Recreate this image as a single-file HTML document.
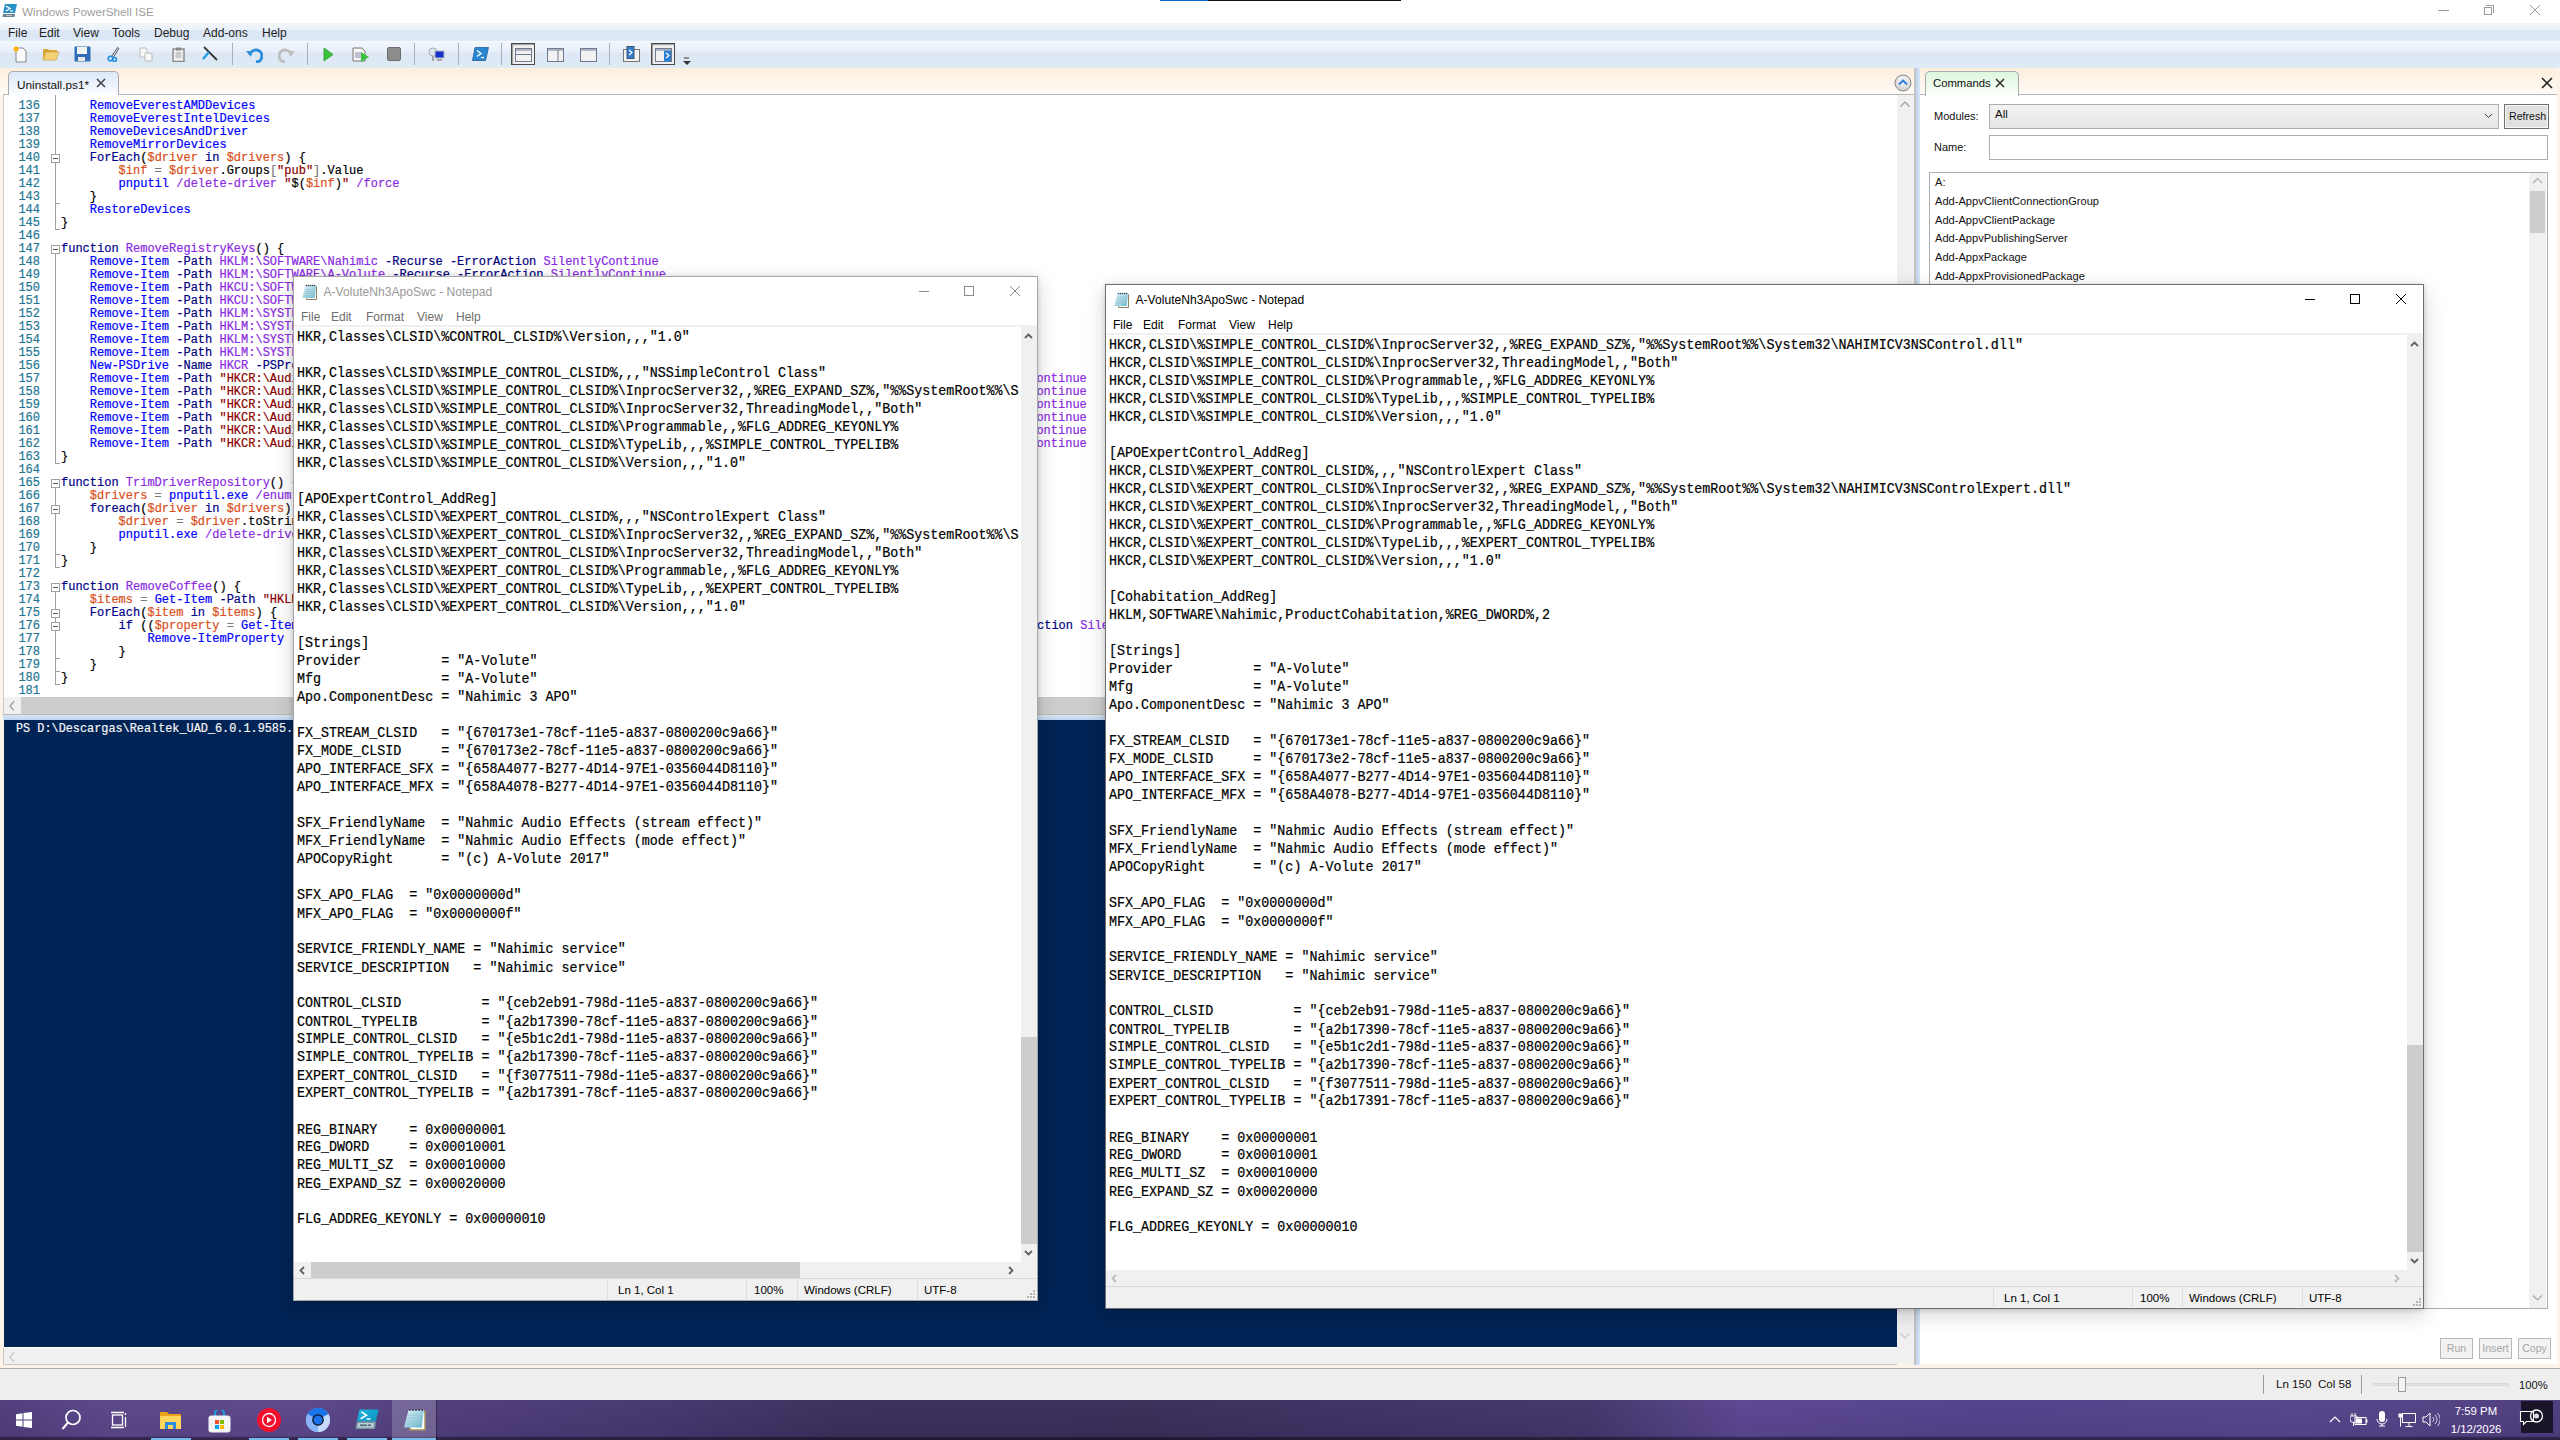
<!DOCTYPE html><html><head><meta charset="utf-8"><title>ISE</title><style>
*{box-sizing:border-box}
body{margin:0;width:2560px;height:1440px;position:relative;overflow:hidden;background:#fff;font-family:"Liberation Sans",sans-serif;font-size:12px;color:#000}
.a{position:absolute}
.mono{font-family:"Liberation Mono",monospace;white-space:pre;-webkit-text-stroke:0.2px currentColor}
pre{margin:0}
</style></head><body><div class="a" style="left:0;top:0;width:2560px;height:23px;background:#fff"></div>
<div class="a" style="left:1160px;top:0;width:48px;height:1px;background:#0a64c8"></div>
<div class="a" style="left:1208px;top:0;width:193px;height:1px;background:#111"></div>
<svg class="a" style="left:2px;top:3px" width="16" height="16" viewBox="0 0 16 16">
<path d="M3 1h12l-2 9H1z" fill="#2a8fc4"/><path d="M4 3l4 2.5-4 2.5" stroke="#fff" stroke-width="1.4" fill="none"/><path d="M8 8h3" stroke="#fff" stroke-width="1.2"/>
<path d="M1 11h12l-.6 3H.4z" fill="#6b7f8c"/><path d="M4 12.5h6" stroke="#cfd8de" stroke-width=".8"/></svg>
<div class="a" style="left:22px;top:5px;font-size:11.7px;color:#a0a0a0">Windows PowerShell ISE</div>
<div class="a" style="left:2438px;top:10px;width:11px;height:1px;background:#9a9a9a"></div>
<div class="a" style="left:2486px;top:5px;width:8px;height:8px;border:1px solid #9a9a9a;border-left:none;border-bottom:none"></div>
<div class="a" style="left:2484px;top:7px;width:8px;height:8px;border:1px solid #9a9a9a"></div>
<svg class="a" style="left:2529px;top:4px" width="12" height="12"><path d="M1 1L11 11M11 1L1 11" stroke="#9a9a9a" stroke-width="1"/></svg>
<div class="a" style="left:0;top:23px;width:2560px;height:18px;background:linear-gradient(#f3f7fb,#ebf1fa 38%,#dde7f5 42%,#dce7f5 80%,#e0ebf8)"></div>
<div class="a" style="left:8px;top:26px;font-size:12px;color:#1e1e1e">File</div>
<div class="a" style="left:39px;top:26px;font-size:12px;color:#1e1e1e">Edit</div>
<div class="a" style="left:73px;top:26px;font-size:12px;color:#1e1e1e">View</div>
<div class="a" style="left:112px;top:26px;font-size:12px;color:#1e1e1e">Tools</div>
<div class="a" style="left:154px;top:26px;font-size:12px;color:#1e1e1e">Debug</div>
<div class="a" style="left:203px;top:26px;font-size:12px;color:#1e1e1e">Add-ons</div>
<div class="a" style="left:262px;top:26px;font-size:12px;color:#1e1e1e">Help</div>
<div class="a" style="left:0;top:41px;width:2560px;height:27px;background:linear-gradient(#f3f8fc,#edf2fb 25%,#e7effa 40%,#dee7f5 44%,#dde8f5 75%,#e0ebf8)"></div>
<div class="a" style="left:232px;top:43px;width:1px;height:22px;background:#a8b0bc"></div>
<div class="a" style="left:307px;top:43px;width:1px;height:22px;background:#a8b0bc"></div>
<div class="a" style="left:414px;top:43px;width:1px;height:22px;background:#a8b0bc"></div>
<div class="a" style="left:458px;top:43px;width:1px;height:22px;background:#a8b0bc"></div>
<div class="a" style="left:501px;top:43px;width:1px;height:22px;background:#a8b0bc"></div>
<div class="a" style="left:609px;top:43px;width:1px;height:22px;background:#a8b0bc"></div>
<div class="a" style="left:511px;top:43px;width:24px;height:22px;border:1px solid #4a4a4a;background:#f0f0f0;box-shadow:inset 1px 1px 1px #999"></div>
<div class="a" style="left:651px;top:43px;width:24px;height:22px;border:1px solid #4a4a4a;background:#f0f0f0;box-shadow:inset 1px 1px 1px #999"></div>
<svg class="a" style="left:11px;top:45px" width="18" height="18" viewBox="0 0 18 18"><path d="M5 3h7l3 3v11H5z" fill="#fafafa" stroke="#888"/><circle cx="5" cy="4" r="2.5" fill="#ffb300"/></svg>
<svg class="a" style="left:42px;top:46px" width="18" height="16" viewBox="0 0 18 16"><path d="M1 3h5l1 1h8v9H1z" fill="#d9a93d"/><path d="M1 14l3-8h13l-3 8z" fill="#f3d27a" stroke="#c99a30" stroke-width=".6"/></svg>
<svg class="a" style="left:74px;top:46px" width="17" height="16" viewBox="0 0 17 16"><rect x="0.5" y="0.5" width="16" height="15" rx="1" fill="#2f6eb8"/><rect x="3" y="1" width="10" height="7" fill="#f4f4f4"/><rect x="4" y="11" width="7" height="4" fill="#e8e8e8"/></svg>
<svg class="a" style="left:107px;top:46px" width="14" height="16" viewBox="0 0 14 16"><path d="M4 11L11 1M6 12L12 2" stroke="#555" stroke-width="1"/><circle cx="3.5" cy="12.5" r="2.3" fill="none" stroke="#1e8fe0" stroke-width="1.6"/><circle cx="7.5" cy="13.5" r="2" fill="none" stroke="#1e8fe0" stroke-width="1.6"/></svg>
<svg class="a" style="left:139px;top:47px" width="14" height="15" viewBox="0 0 14 15"><path d="M1 1h6l1 1v8H1z" fill="#f8f8f8" stroke="#bbb"/><path d="M6 6h6l1 1v7H6z" fill="#f8f8f8" stroke="#bbb"/></svg>
<svg class="a" style="left:172px;top:47px" width="13" height="15" viewBox="0 0 13 15"><rect x="1" y="2" width="11" height="12.5" fill="#eee" stroke="#888" stroke-width="1.4"/><rect x="4" y="0.5" width="5" height="3" fill="#888"/><path d="M3.5 6h6M3.5 8h6M3.5 10h6" stroke="#aaa"/></svg>
<svg class="a" style="left:202px;top:46px" width="16" height="15" viewBox="0 0 16 15"><path d="M2 1L15 14" stroke="#333" stroke-width="1.8"/><path d="M7 6L1 13" stroke="#1e9be0" stroke-width="2.2"/></svg>
<svg class="a" style="left:246px;top:46px" width="17" height="17" viewBox="0 0 17 17"><path d="M4 9 A6 6 0 1 1 10 16" fill="none" stroke="#2f8fd6" stroke-width="3"/><path d="M0 5l6 0 -1 6z" fill="#2f8fd6"/></svg>
<svg class="a" style="left:278px;top:46px" width="17" height="17" viewBox="0 0 17 17"><path d="M13 9 A6 6 0 1 0 7 16" fill="none" stroke="#bdbdbd" stroke-width="3"/><path d="M17 5l-6 0 1 6z" fill="#bdbdbd"/></svg>
<svg class="a" style="left:323px;top:47px" width="11" height="15" viewBox="0 0 11 15"><path d="M1 1l9 6.5-9 6.5z" fill="#3cc23c" stroke="#2a9a2a" stroke-width=".8"/></svg>
<svg class="a" style="left:352px;top:46px" width="18" height="16" viewBox="0 0 18 16"><path d="M1 2h9l3 3v10H1z" fill="#f7f7f7" stroke="#777"/><path d="M3 7h6M3 9h6M3 11h6" stroke="#8a8ab0"/><path d="M9 6l8 5-8 5z" fill="#3cc23c"/></svg>
<svg class="a" style="left:387px;top:47px" width="14" height="14" viewBox="0 0 14 14"><rect x="0.5" y="0.5" width="13" height="13" rx="1.5" fill="#8c8c8c" stroke="#6e6e6e"/></svg>
<svg class="a" style="left:428px;top:46px" width="17" height="16" viewBox="0 0 17 16"><circle cx="5" cy="6" r="4" fill="#dfe8ee" stroke="#aab"/><rect x="7" y="5" width="9" height="7" fill="#1530c8" stroke="#bbb"/><path d="M9 14h5M5 10v5" stroke="#666"/></svg>
<svg class="a" style="left:472px;top:47px" width="17" height="14" viewBox="0 0 17 14"><path d="M3 0.5h13.5l-3 13H0.5z" fill="#2b86d0" stroke="#1d5fa0" stroke-width=".8"/><path d="M5 3.5l4 3-4 3" stroke="#fff" stroke-width="1.4" fill="none"/><path d="M9 10.5h3" stroke="#fff" stroke-width="1.2"/></svg>
<svg class="a" style="left:515px;top:48px" width="17" height="14" viewBox="0 0 17 14"><rect x="0.5" y="0.5" width="16" height="13" fill="#f2f2f2" stroke="#6f7a90"/><path d="M1 2h15M1 6.5h15" stroke="#6f7a90"/></svg>
<svg class="a" style="left:547px;top:48px" width="17" height="14" viewBox="0 0 17 14"><rect x="0.5" y="0.5" width="16" height="13" fill="#f2f2f2" stroke="#6f7a90"/><path d="M1 2h15M11 2v11" stroke="#6f7a90"/></svg>
<svg class="a" style="left:580px;top:48px" width="17" height="14" viewBox="0 0 17 14"><rect x="0.5" y="0.5" width="16" height="13" fill="#f2f2f2" stroke="#6f7a90"/><path d="M1 2h15" stroke="#6f7a90"/></svg>
<svg class="a" style="left:623px;top:46px" width="17" height="16" viewBox="0 0 17 16"><rect x="0.5" y="3.5" width="16" height="12" fill="#f2f2f2" stroke="#777"/><rect x="4" y="0.5" width="7" height="12" fill="#2f7fd0" stroke="#456"/><path d="M6 4l3 2.5-3 2.5" stroke="#fff" stroke-width="1.2" fill="none"/></svg>
<svg class="a" style="left:655px;top:48px" width="17" height="14" viewBox="0 0 17 14"><rect x="0.5" y="0.5" width="16" height="13" fill="#f2f2f2" stroke="#6f7a90"/><path d="M1 2h15" stroke="#6f7a90"/><rect x="9" y="2.5" width="7" height="11" fill="#2f7fd0"/><path d="M11 5l3 2.5-3 2.5" stroke="#fff" stroke-width="1.2" fill="none"/></svg>
<svg class="a" style="left:683px;top:57px" width="8" height="8" viewBox="0 0 8 8"><path d="M1 1h5" stroke="#333"/><path d="M0 4h8l-4 4z" fill="#333"/></svg>
<div class="a" style="left:0;top:68px;width:2560px;height:1300px;background:#fdf3e8"></div>
<div class="a" style="left:0;top:68px;width:2560px;height:27px;background:linear-gradient(#fdeedd,#fef7ef 70%,#fffcf8)"></div>
<div class="a" style="left:8px;top:71px;width:111px;height:25px;border:1px solid #a9a9a9;border-bottom:none;border-radius:5px 5px 0 0;background:linear-gradient(#dce8f8,#eef4fc 60%,#fff)"></div>
<div class="a" style="left:17px;top:78px;font-size:11.8px;color:#111">Uninstall.ps1*</div>
<svg class="a" style="left:96px;top:78px" width="10" height="10" viewBox="0 0 10 10"><path d="M1 1L9 9M9 1L1 9" stroke="#444" stroke-width="1.6"/></svg>
<div class="a" style="left:3px;top:95px;width:1894px;height:602px;background:#fff;border-left:1px solid #c8c8c8"></div>
<div class="a" style="left:55px;top:95px;width:1px;height:594px;background:#a0a0a0"></div>
<div class="a" style="left:1897px;top:95px;width:17px;height:620px;background:#f0f0f0"></div>
<svg class="a" style="left:1899px;top:100px" width="12" height="8" viewBox="0 0 12 8"><path d="M1.5 6.5L6 2l4.5 4.5" stroke="#9a9a9a" fill="none" stroke-width="1.2"/></svg>
<div class="a" style="left:3px;top:94px;width:1911px;height:1px;background:#b5b5b5"></div>
<div class="a" style="left:9px;top:93px;width:109px;height:2px;background:#fbfdff"></div>
<svg class="a" style="left:1894px;top:74px" width="18" height="18" viewBox="0 0 18 18"><defs><radialGradient id="cg" cx="50%" cy="35%" r="60%"><stop offset="0" stop-color="#fff"/><stop offset="1" stop-color="#cfcfcf"/></radialGradient></defs><circle cx="9" cy="9" r="8" fill="url(#cg)" stroke="#8a8a8a"/><path d="M5 10.5L9 6.5l4 4" stroke="#2f7fd8" stroke-width="2" fill="none"/></svg>
<div class="a" style="left:3px;top:697px;width:1894px;height:17px;background:#f0f0f0;border-left:1px solid #c8c8c8"></div>
<div class="a" style="left:21px;top:697px;width:1858px;height:17px;background:#cdcdcd"></div>
<svg class="a" style="left:8px;top:700px" width="8" height="12" viewBox="0 0 8 12"><path d="M6 1.5L2 6l4 4.5" stroke="#9a9a9a" fill="none" stroke-width="1.2"/></svg>
<div class="a" style="left:3px;top:714px;width:1894px;height:1px;background:#c0b8b0"></div>
<div class="a" style="left:3px;top:715px;width:1894px;height:5px;background:linear-gradient(#dbe7f5,#bcd4f0)"></div>
<div class="a" style="left:4px;top:720px;width:1893px;height:627px;background:#012456"></div>
<div class="a" style="left:3px;top:1347px;width:1894px;height:17px;background:#f0f0f0;border-left:1px solid #c8c8c8;border-top:1px solid #fff"></div>
<svg class="a" style="left:8px;top:1351px" width="8" height="12" viewBox="0 0 8 12"><path d="M6 1.5L2 6l4 4.5" stroke="#c8c8c8" fill="none" stroke-width="1.2"/></svg>
<div class="a" style="left:3px;top:1364px;width:1894px;height:1px;background:#c8c8c8"></div>
<div class="a" style="left:1897px;top:720px;width:17px;height:644px;background:#f0f0f0"></div>
<svg class="a" style="left:1899px;top:1332px" width="12" height="8" viewBox="0 0 12 8"><path d="M1.5 1.5L6 6l4.5-4.5" stroke="#c8c8c8" fill="none" stroke-width="1.2"/></svg>
<div class="a" style="left:1914px;top:68px;width:2px;height:1297px;background:#c4c4c4"></div>
<div class="a" style="left:1916px;top:68px;width:4px;height:1297px;background:linear-gradient(90deg,#bcd4f0,#dbe7f5)"></div>
<div class="a" style="left:0;top:1368px;width:2560px;height:1px;background:#a8a8a8"></div>
<div class="a" style="left:0;top:1369px;width:2560px;height:31px;background:#eeeeee"></div>
<div class="a" style="left:2263px;top:1375px;width:1px;height:19px;background:#9a9a9a"></div>
<div class="a" style="left:2361px;top:1375px;width:1px;height:19px;background:#9a9a9a"></div>
<div class="a" style="left:2276px;top:1377px;font-size:11.6px;color:#111">Ln 150&nbsp; Col 58</div>
<div class="a" style="left:2373px;top:1383px;width:136px;height:3px;background:#e2e2e2;border:1px solid #d8d8d8"></div>
<div class="a" style="left:2398px;top:1377px;width:8px;height:15px;background:#f4f4f4;border:1px solid #9a9a9a"></div>
<div class="a" style="left:2519px;top:1379px;font-size:11.2px;color:#111">100%</div>
<pre class="a mono" style="left:61px;top:100px;font-size:12.000px;line-height:13px;color:#000;width:1835px;overflow:hidden;height:598px">    <span style="color:#0000ff">RemoveEverestAMDDevices</span>
    <span style="color:#0000ff">RemoveEverestIntelDevices</span>
    <span style="color:#0000ff">RemoveDevicesAndDriver</span>
    <span style="color:#0000ff">RemoveMirrorDevices</span>
    <span style="color:#00008b">ForEach</span>(<span style="color:#d8501c">$driver</span> <span style="color:#00008b">in</span> <span style="color:#d8501c">$drivers</span>) {
        <span style="color:#d8501c">$inf</span><span style="color:#7a7a7a"> = </span><span style="color:#d8501c">$driver</span><span style="color:#000000">.Groups</span><span style="color:#7a7a7a">[</span><span style="color:#8b0000">"pub"</span><span style="color:#7a7a7a">]</span><span style="color:#000000">.Value</span>
        <span style="color:#0000ff">pnputil</span> <span style="color:#8a2be2">/delete-driver</span> <span style="color:#8b0000">"</span>$(<span style="color:#d8501c">$inf</span>)<span style="color:#8b0000">"</span> <span style="color:#8a2be2">/force</span>
    }
    <span style="color:#0000ff">RestoreDevices</span>
}

<span style="color:#00008b">function</span> <span style="color:#8a2be2">RemoveRegistryKeys</span>() {
    <span style="color:#0000ff">Remove-Item</span> <span style="color:#000080">-Path</span> <span style="color:#8a2be2">HKLM:\SOFTWARE\Nahimic</span> <span style="color:#000080">-Recurse</span> <span style="color:#000080">-ErrorAction</span> <span style="color:#8a2be2">SilentlyContinue</span>
    <span style="color:#0000ff">Remove-Item</span> <span style="color:#000080">-Path</span> <span style="color:#8a2be2">HKLM:\SOFTWARE\A-Volute</span> <span style="color:#000080">-Recurse</span> <span style="color:#000080">-ErrorAction</span> <span style="color:#8a2be2">SilentlyContinue</span>
    <span style="color:#0000ff">Remove-Item</span> <span style="color:#000080">-Path</span> <span style="color:#8a2be2">HKCU:\SOFTWARE\Nahimic</span> <span style="color:#000080">-Recurse</span> <span style="color:#000080">-ErrorAction</span> <span style="color:#8a2be2">SilentlyContinue</span>
    <span style="color:#0000ff">Remove-Item</span> <span style="color:#000080">-Path</span> <span style="color:#8a2be2">HKCU:\SOFTWARE\A-Volute</span> <span style="color:#000080">-Recurse</span> <span style="color:#000080">-ErrorAction</span> <span style="color:#8a2be2">SilentlyContinue</span>
    <span style="color:#0000ff">Remove-Item</span> <span style="color:#000080">-Path</span> <span style="color:#8a2be2">HKLM:\SYSTEM\CurrentControlSet\Services\NahimicService</span> <span style="color:#000080">-Recurse</span> <span style="color:#000080">-ErrorAction</span> <span style="color:#8a2be2">SilentlyContinue</span>
    <span style="color:#0000ff">Remove-Item</span> <span style="color:#000080">-Path</span> <span style="color:#8a2be2">HKLM:\SYSTEM\CurrentControlSet\Services\NahimicService</span> <span style="color:#000080">-Recurse</span> <span style="color:#000080">-ErrorAction</span> <span style="color:#8a2be2">SilentlyContinue</span>
    <span style="color:#0000ff">Remove-Item</span> <span style="color:#000080">-Path</span> <span style="color:#8a2be2">HKLM:\SYSTEM\CurrentControlSet\Services\NahimicService</span> <span style="color:#000080">-Recurse</span> <span style="color:#000080">-ErrorAction</span> <span style="color:#8a2be2">SilentlyContinue</span>
    <span style="color:#0000ff">Remove-Item</span> <span style="color:#000080">-Path</span> <span style="color:#8a2be2">HKLM:\SYSTEM\CurrentControlSet\Services\NahimicService</span> <span style="color:#000080">-Recurse</span> <span style="color:#000080">-ErrorAction</span> <span style="color:#8a2be2">SilentlyContinue</span>
    <span style="color:#0000ff">New-PSDrive</span> <span style="color:#000080">-Name</span> <span style="color:#8a2be2">HKCR</span> <span style="color:#000080">-PSProvider</span> <span style="color:#8a2be2">Registry</span> <span style="color:#000080">-Root</span> <span style="color:#8a2be2">HKEY_CLASSES_ROOT</span>
    <span style="color:#0000ff">Remove-Item</span> <span style="color:#000080">-Path</span> <span style="color:#8b0000">"HKCR:\AudioEngine\AudioProcessingObjects\{670173e1-78cf-11e5-a837-0800200c9a66}</span>
    <span style="color:#0000ff">Remove-Item</span> <span style="color:#000080">-Path</span> <span style="color:#8b0000">"HKCR:\AudioEngine\AudioProcessingObjects\{670173e2-78cf-11e5-a837-0800200c9a66}</span>
    <span style="color:#0000ff">Remove-Item</span> <span style="color:#000080">-Path</span> <span style="color:#8b0000">"HKCR:\AudioEngine\AudioProcessingObjects\{670173e3-78cf-11e5-a837-0800200c9a66}</span>
    <span style="color:#0000ff">Remove-Item</span> <span style="color:#000080">-Path</span> <span style="color:#8b0000">"HKCR:\AudioEngine\AudioProcessingObjects\{670173e4-78cf-11e5-a837-0800200c9a66}</span>
    <span style="color:#0000ff">Remove-Item</span> <span style="color:#000080">-Path</span> <span style="color:#8b0000">"HKCR:\AudioEngine\AudioProcessingObjects\{670173e5-78cf-11e5-a837-0800200c9a66}</span>
    <span style="color:#0000ff">Remove-Item</span> <span style="color:#000080">-Path</span> <span style="color:#8b0000">"HKCR:\AudioEngine\AudioProcessingObjects\{670173e6-78cf-11e5-a837-0800200c9a66}</span>
}

<span style="color:#00008b">function</span> <span style="color:#8a2be2">TrimDriverRepository</span>() {
    <span style="color:#d8501c">$drivers</span><span style="color:#7a7a7a"> = </span><span style="color:#0000ff">pnputil.exe</span> <span style="color:#8a2be2">/enum-drivers</span><span style="color:#7a7a7a"> | </span><span style="color:#0000ff">Select-String</span>
    <span style="color:#00008b">foreach</span>(<span style="color:#d8501c">$driver</span> <span style="color:#00008b">in</span> <span style="color:#d8501c">$drivers</span>) {
        <span style="color:#d8501c">$driver</span><span style="color:#7a7a7a"> = </span><span style="color:#d8501c">$driver</span><span style="color:#000000">.toString</span>()
        <span style="color:#0000ff">pnputil.exe</span> <span style="color:#8a2be2">/delete-driver</span>
    }
}

<span style="color:#00008b">function</span> <span style="color:#8a2be2">RemoveCoffee</span>() {
    <span style="color:#d8501c">$items</span><span style="color:#7a7a7a"> = </span><span style="color:#0000ff">Get-Item</span> <span style="color:#000080">-Path</span> <span style="color:#8b0000">"HKLM:\SYSTEM\CurrentControlSet\Control\Class\*"</span>
    <span style="color:#00008b">ForEach</span>(<span style="color:#d8501c">$item</span> <span style="color:#00008b">in</span> <span style="color:#d8501c">$items</span>) {
        <span style="color:#00008b">if</span> ((<span style="color:#d8501c">$property</span><span style="color:#7a7a7a"> = </span><span style="color:#0000ff">Get-ItemProperty</span> <span style="color:#000080">-Path</span> <span style="color:#d8501c">$item</span><span style="color:#000000">.PSPath</span> <span style="color:#000080">-Name</span>
            <span style="color:#0000ff">Remove-ItemProperty</span>
        }
    }
}
</pre>
<div class="a mono" style="left:971.6px;top:373px;font-size:12.0px;line-height:13px;color:#8a2be2">SilentlyContinue</div>
<div class="a mono" style="left:971.6px;top:386px;font-size:12.0px;line-height:13px;color:#8a2be2">SilentlyContinue</div>
<div class="a mono" style="left:971.6px;top:399px;font-size:12.0px;line-height:13px;color:#8a2be2">SilentlyContinue</div>
<div class="a mono" style="left:971.6px;top:412px;font-size:12.0px;line-height:13px;color:#8a2be2">SilentlyContinue</div>
<div class="a mono" style="left:971.6px;top:425px;font-size:12.0px;line-height:13px;color:#8a2be2">SilentlyContinue</div>
<div class="a mono" style="left:971.6px;top:438px;font-size:12.0px;line-height:13px;color:#8a2be2">SilentlyContinue</div>
<div class="a mono" style="left:986.6px;top:620px;font-size:12.0px;line-height:13px"><span style="color:#000080">-ErrorAction</span> <span style="color:#8a2be2">SilentlyContinue</span></div>
<div class="a" style="left:3px;top:95px;width:52px;height:3px;overflow:hidden"><div class="mono" style="position:absolute;right:15px;top:-10px;font-size:12.000px;line-height:13px;color:#2b91af">135</div></div>
<pre class="a mono" style="left:0;top:100px;width:40px;text-align:right;font-size:12.000px;line-height:13px;color:#1f7694">136
137
138
139
140
141
142
143
144
145
146
147
148
149
150
151
152
153
154
155
156
157
158
159
160
161
162
163
164
165
166
167
168
169
170
171
172
173
174
175
176
177
178
179
180
181</pre>
<div class="a" style="left:55px;top:230px;width:1px;height:15px;background:#fff"></div>
<div class="a" style="left:55px;top:464px;width:1px;height:15px;background:#fff"></div>
<div class="a" style="left:55px;top:568px;width:1px;height:15px;background:#fff"></div>
<div class="a" style="left:55px;top:685px;width:1px;height:12px;background:#fff"></div>
<div class="a" style="left:55px;top:243px;width:1px;height:3px;background:#fff"></div>
<div class="a" style="left:55px;top:477px;width:1px;height:3px;background:#fff"></div>
<div class="a" style="left:55px;top:581px;width:1px;height:3px;background:#fff"></div>
<div class="a" style="left:51px;top:154px;width:9px;height:9px;border:1px solid #a0a0a0;background:#fff"></div><div class="a" style="left:53px;top:158px;width:5px;height:1px;background:#555"></div>
<div class="a" style="left:51px;top:245px;width:9px;height:9px;border:1px solid #a0a0a0;background:#fff"></div><div class="a" style="left:53px;top:249px;width:5px;height:1px;background:#555"></div>
<div class="a" style="left:51px;top:479px;width:9px;height:9px;border:1px solid #a0a0a0;background:#fff"></div><div class="a" style="left:53px;top:483px;width:5px;height:1px;background:#555"></div>
<div class="a" style="left:51px;top:505px;width:9px;height:9px;border:1px solid #a0a0a0;background:#fff"></div><div class="a" style="left:53px;top:509px;width:5px;height:1px;background:#555"></div>
<div class="a" style="left:51px;top:583px;width:9px;height:9px;border:1px solid #a0a0a0;background:#fff"></div><div class="a" style="left:53px;top:587px;width:5px;height:1px;background:#555"></div>
<div class="a" style="left:51px;top:609px;width:9px;height:9px;border:1px solid #a0a0a0;background:#fff"></div><div class="a" style="left:53px;top:613px;width:5px;height:1px;background:#555"></div>
<div class="a" style="left:51px;top:622px;width:9px;height:9px;border:1px solid #a0a0a0;background:#fff"></div><div class="a" style="left:53px;top:626px;width:5px;height:1px;background:#555"></div>
<div class="a" style="left:55px;top:203px;width:5px;height:1px;background:#a0a0a0"></div>
<div class="a" style="left:55px;top:229px;width:5px;height:1px;background:#a0a0a0"></div>
<div class="a" style="left:55px;top:463px;width:5px;height:1px;background:#a0a0a0"></div>
<div class="a" style="left:55px;top:554px;width:5px;height:1px;background:#a0a0a0"></div>
<div class="a" style="left:55px;top:567px;width:5px;height:1px;background:#a0a0a0"></div>
<div class="a" style="left:55px;top:658px;width:5px;height:1px;background:#a0a0a0"></div>
<div class="a" style="left:55px;top:671px;width:5px;height:1px;background:#a0a0a0"></div>
<div class="a" style="left:55px;top:684px;width:5px;height:1px;background:#a0a0a0"></div>
<pre class="a mono" style="left:16px;top:723px;font-size:11.85px;line-height:13px;color:#f5f5f5">PS D:\Descargas\Realtek_UAD_6.0.1.9585.1_Win10_Win11_ML_Driver\Nahimic&gt;</pre>
<div class="a" style="left:1920px;top:95px;width:637px;height:1269px;background:#fff"></div>
<div class="a" style="left:1920px;top:94px;width:640px;height:1px;background:#b5b5b5"></div>
<div class="a" style="left:2557px;top:68px;width:3px;height:1300px;background:#fdf3e8"></div>
<div class="a" style="left:1925px;top:71px;width:94px;height:25px;border:1px solid #a9a9a9;border-bottom:none;border-radius:5px 5px 0 0;background:linear-gradient(#ddf6de,#effbef 60%,#fff)"></div>
<div class="a" style="left:1926px;top:93px;width:92px;height:2px;background:#fbfffb"></div>
<div class="a" style="left:1933px;top:77px;font-size:11.3px;color:#111">Commands</div>
<svg class="a" style="left:1995px;top:78px" width="10" height="10" viewBox="0 0 10 10"><path d="M1 1L9 9M9 1L1 9" stroke="#333" stroke-width="1.6"/></svg>
<svg class="a" style="left:2541px;top:77px" width="12" height="12" viewBox="0 0 12 12"><path d="M1 1L11 11M11 1L1 11" stroke="#222" stroke-width="1.6"/></svg>
<div class="a" style="left:1934px;top:110px;font-size:11px;color:#111">Modules:</div>
<div class="a" style="left:1989px;top:104px;width:510px;height:25px;border:1px solid #adadad;background:linear-gradient(#f2f2f2,#e6e6e6)"></div>
<div class="a" style="left:1995px;top:108px;font-size:11.5px;color:#111">All</div>
<svg class="a" style="left:2484px;top:113px" width="9" height="6" viewBox="0 0 9 6"><path d="M1 1l3.5 3.5L8 1" stroke="#444" fill="none"/></svg>
<div class="a" style="left:2504px;top:104px;width:45px;height:25px;border:1px solid #707070;background:#e1e1e1;box-shadow:inset 0 0 0 1px #f8f8f8"></div>
<div class="a" style="left:2509px;top:110px;font-size:10.6px;color:#111">Refresh</div>
<div class="a" style="left:1934px;top:141px;font-size:11px;color:#111">Name:</div>
<div class="a" style="left:1989px;top:135px;width:559px;height:25px;border:1px solid #abadb3;background:#fff"></div>
<div class="a" style="left:1929px;top:172px;width:619px;height:1137px;border:1px solid #abadb3;background:#fff"></div>
<div class="a" style="left:1935px;top:176.0px;font-size:11.1px;color:#111">A:</div>
<div class="a" style="left:1935px;top:194.8px;font-size:11.1px;color:#111">Add-AppvClientConnectionGroup</div>
<div class="a" style="left:1935px;top:213.5px;font-size:11.1px;color:#111">Add-AppvClientPackage</div>
<div class="a" style="left:1935px;top:232.2px;font-size:11.1px;color:#111">Add-AppvPublishingServer</div>
<div class="a" style="left:1935px;top:251.0px;font-size:11.1px;color:#111">Add-AppxPackage</div>
<div class="a" style="left:1935px;top:269.8px;font-size:11.1px;color:#111">Add-AppxProvisionedPackage</div>
<div class="a" style="left:1935px;top:288.5px;font-size:11.1px;color:#111">Add-AppxVolume</div>
<div class="a" style="left:1935px;top:307.2px;font-size:11.1px;color:#111">Add-BCDataCacheExtension</div>
<div class="a" style="left:2529px;top:173px;width:17px;height:1135px;background:#f0f0f0"></div>
<div class="a" style="left:2530px;top:191px;width:15px;height:42px;background:#cdcdcd"></div>
<svg class="a" style="left:2532px;top:177px" width="11" height="8" viewBox="0 0 11 8"><path d="M1 6L5.5 1.5 10 6" stroke="#aaa" fill="none" stroke-width="1.2"/></svg>
<svg class="a" style="left:2532px;top:1294px" width="11" height="8" viewBox="0 0 11 8"><path d="M1 1.5L5.5 6 10 1.5" stroke="#aaa" fill="none" stroke-width="1.2"/></svg>
<div class="a" style="left:2440px;top:1338px;width:33px;height:21px;border:1px solid #b8b8b8;background:#f2f2f2;color:#a6a6a6;font-size:10.6px;text-align:center;line-height:19px">Run</div>
<div class="a" style="left:2479px;top:1338px;width:33px;height:21px;border:1px solid #b8b8b8;background:#f2f2f2;color:#a6a6a6;font-size:10.6px;text-align:center;line-height:19px">Insert</div>
<div class="a" style="left:2518px;top:1338px;width:33px;height:21px;border:1px solid #b8b8b8;background:#f2f2f2;color:#a6a6a6;font-size:10.6px;text-align:center;line-height:19px">Copy</div>
<div class="a" style="left:293px;top:276px;width:745px;height:1025px;background:#fff;border:1px solid #a5a5a5;box-shadow:0 1px 5px rgba(0,0,0,.16),0 6px 20px rgba(0,0,0,.17)"></div>
<svg class="a" style="left:302px;top:284px" width="16" height="16" viewBox="0 0 16 16"><defs><linearGradient id="npg" x1="0" y1="0" x2="1" y2="1"><stop offset="0" stop-color="#e2f5fb"/><stop offset="1" stop-color="#6fb9d0"/></linearGradient></defs><path d="M4.5 2.5h10v13h-10z" fill="#fff" stroke="#8f8060" stroke-width="1"/><path d="M3.3 1.3h11l-1.6 12.7H0.3z" fill="url(#npg)"/><path d="M3.3 5.5h9.5M3 7.5h9.5M2.8 9.5h9.5M2.5 11.5h9.5" stroke="#9cc6d3" stroke-width=".8"/><g fill="#3b4650"><circle cx="4.5" cy="1.5" r=".8"/><circle cx="6.5" cy="1.5" r=".8"/><circle cx="8.5" cy="1.5" r=".8"/><circle cx="10.5" cy="1.5" r=".8"/><circle cx="12.5" cy="1.5" r=".8"/></g></svg>
<div class="a" style="left:323.5px;top:285px;font-size:12.1px;color:#999">A-VoluteNh3ApoSwc - Notepad</div>
<div class="a" style="left:919px;top:291px;width:10px;height:1px;background:#8a8a8a"></div>
<div class="a" style="left:964px;top:286px;width:10px;height:10px;border:1px solid #8a8a8a"></div>
<svg class="a" style="left:1010px;top:286px" width="10" height="10" viewBox="0 0 10 10"><path d="M0 0L10 10M10 0L0 10" stroke="#8a8a8a" stroke-width="1"/></svg>
<div class="a" style="left:301px;top:310px;font-size:12px;color:#6d6d6d">File</div>
<div class="a" style="left:331px;top:310px;font-size:12px;color:#6d6d6d">Edit</div>
<div class="a" style="left:366px;top:310px;font-size:12px;color:#6d6d6d">Format</div>
<div class="a" style="left:417px;top:310px;font-size:12px;color:#6d6d6d">View</div>
<div class="a" style="left:456px;top:310px;font-size:12px;color:#6d6d6d">Help</div>
<div class="a" style="left:294px;top:325px;width:743px;height:2px;background:#f0f0f0"></div>
<div class="a" style="left:294px;top:327px;width:725px;height:935px;overflow:hidden"><pre class="mono" style="position:absolute;left:3px;top:1.5px;font-size:13.360px;line-height:16.6667px;transform:scaleY(1.08);transform-origin:0 0;color:#000">HKR,Classes\CLSID\%CONTROL_CLSID%\Version,,,"1.0"

HKR,Classes\CLSID\%SIMPLE_CONTROL_CLSID%,,,"NSSimpleControl Class"
HKR,Classes\CLSID\%SIMPLE_CONTROL_CLSID%\InprocServer32,,%REG_EXPAND_SZ%,"%%SystemRoot%%\System32\NAHIMICV3NSControl.dll"
HKR,Classes\CLSID\%SIMPLE_CONTROL_CLSID%\InprocServer32,ThreadingModel,,"Both"
HKR,Classes\CLSID\%SIMPLE_CONTROL_CLSID%\Programmable,,%FLG_ADDREG_KEYONLY%
HKR,Classes\CLSID\%SIMPLE_CONTROL_CLSID%\TypeLib,,,%SIMPLE_CONTROL_TYPELIB%
HKR,Classes\CLSID\%SIMPLE_CONTROL_CLSID%\Version,,,"1.0"

[APOExpertControl_AddReg]
HKR,Classes\CLSID\%EXPERT_CONTROL_CLSID%,,,"NSControlExpert Class"
HKR,Classes\CLSID\%EXPERT_CONTROL_CLSID%\InprocServer32,,%REG_EXPAND_SZ%,"%%SystemRoot%%\System32\NAHIMICV3NSControlExpert.dll"
HKR,Classes\CLSID\%EXPERT_CONTROL_CLSID%\InprocServer32,ThreadingModel,,"Both"
HKR,Classes\CLSID\%EXPERT_CONTROL_CLSID%\Programmable,,%FLG_ADDREG_KEYONLY%
HKR,Classes\CLSID\%EXPERT_CONTROL_CLSID%\TypeLib,,,%EXPERT_CONTROL_TYPELIB%
HKR,Classes\CLSID\%EXPERT_CONTROL_CLSID%\Version,,,"1.0"

[Strings]
Provider          = "A-Volute"
Mfg               = "A-Volute"
Apo.ComponentDesc = "Nahimic 3 APO"

FX_STREAM_CLSID   = "{670173e1-78cf-11e5-a837-0800200c9a66}"
FX_MODE_CLSID     = "{670173e2-78cf-11e5-a837-0800200c9a66}"
APO_INTERFACE_SFX = "{658A4077-B277-4D14-97E1-0356044D8110}"
APO_INTERFACE_MFX = "{658A4078-B277-4D14-97E1-0356044D8110}"

SFX_FriendlyName  = "Nahmic Audio Effects (stream effect)"
MFX_FriendlyName  = "Nahmic Audio Effects (mode effect)"
APOCopyRight      = "(c) A-Volute 2017"

SFX_APO_FLAG  = "0x0000000d"
MFX_APO_FLAG  = "0x0000000f"

SERVICE_FRIENDLY_NAME = "Nahimic service"
SERVICE_DESCRIPTION   = "Nahimic service"

CONTROL_CLSID          = "{ceb2eb91-798d-11e5-a837-0800200c9a66}"
CONTROL_TYPELIB        = "{a2b17390-78cf-11e5-a837-0800200c9a66}"
SIMPLE_CONTROL_CLSID   = "{e5b1c2d1-798d-11e5-a837-0800200c9a66}"
SIMPLE_CONTROL_TYPELIB = "{a2b17390-78cf-11e5-a837-0800200c9a66}"
EXPERT_CONTROL_CLSID   = "{f3077511-798d-11e5-a837-0800200c9a66}"
EXPERT_CONTROL_TYPELIB = "{a2b17391-78cf-11e5-a837-0800200c9a66}"

REG_BINARY    = 0x00000001
REG_DWORD     = 0x00010001
REG_MULTI_SZ  = 0x00010000
REG_EXPAND_SZ = 0x00020000

FLG_ADDREG_KEYONLY = 0x00000010
</pre></div>
<div class="a" style="left:1021px;top:327px;width:16px;height:935px;background:#f0f0f0"></div>
<div class="a" style="left:1021px;top:1037px;width:16px;height:207px;background:#cdcdcd"></div>
<svg class="a" style="left:1024px;top:333px" width="9" height="6" viewBox="0 0 9 6"><path d="M1 5L4.5 1.5 8 5" stroke="#606060" fill="none" stroke-width="1.8"/></svg>
<svg class="a" style="left:1024px;top:1250px" width="9" height="6" viewBox="0 0 9 6"><path d="M1 1L4.5 4.5 8 1" stroke="#606060" fill="none" stroke-width="1.8"/></svg>
<div class="a" style="left:294px;top:1262px;width:743px;height:16px;background:#f0f0f0"></div>
<div class="a" style="left:311px;top:1262px;width:489px;height:16px;background:#cdcdcd"></div>
<svg class="a" style="left:299px;top:1266px" width="6" height="9" viewBox="0 0 6 9"><path d="M5 1L1.5 4.5 5 8" stroke="#606060" fill="none" stroke-width="1.8"/></svg>
<svg class="a" style="left:1008px;top:1266px" width="6" height="9" viewBox="0 0 6 9"><path d="M1 1L4.5 4.5 1 8" stroke="#606060" fill="none" stroke-width="1.8"/></svg>
<div class="a" style="left:294px;top:1278px;width:743px;height:1px;background:#d9d9d9"></div>
<div class="a" style="left:294px;top:1279px;width:743px;height:21px;background:#f0f0f0"></div>
<div class="a" style="left:607px;top:1280px;width:1px;height:19px;background:#dcdcdc"></div>
<div class="a" style="left:746px;top:1280px;width:1px;height:19px;background:#dcdcdc"></div>
<div class="a" style="left:797px;top:1280px;width:1px;height:19px;background:#dcdcdc"></div>
<div class="a" style="left:917px;top:1280px;width:1px;height:19px;background:#dcdcdc"></div>
<div class="a" style="left:618px;top:1284px;font-size:11.5px;color:#000">Ln 1, Col 1</div>
<div class="a" style="left:754px;top:1284px;font-size:11.5px;color:#000">100%</div>
<div class="a" style="left:804px;top:1284px;font-size:11.5px;color:#000">Windows (CRLF)</div>
<div class="a" style="left:924px;top:1284px;font-size:11.5px;color:#000">UTF-8</div>
<svg class="a" style="left:1027px;top:1290px" width="9" height="9" viewBox="0 0 9 9"><g fill="#b5b5b5"><rect x="6" y="0" width="2" height="2"/><rect x="3" y="3" width="2" height="2"/><rect x="6" y="3" width="2" height="2"/><rect x="0" y="6" width="2" height="2"/><rect x="3" y="6" width="2" height="2"/><rect x="6" y="6" width="2" height="2"/></g></svg>
<div class="a" style="left:1105px;top:284px;width:1319px;height:1025px;background:#fff;border:1px solid #6f6f6f;box-shadow:0 1px 5px rgba(0,0,0,.16),0 6px 20px rgba(0,0,0,.17)"></div>
<svg class="a" style="left:1114px;top:292px" width="16" height="16" viewBox="0 0 16 16"><defs><linearGradient id="npg" x1="0" y1="0" x2="1" y2="1"><stop offset="0" stop-color="#e2f5fb"/><stop offset="1" stop-color="#6fb9d0"/></linearGradient></defs><path d="M4.5 2.5h10v13h-10z" fill="#fff" stroke="#8f8060" stroke-width="1"/><path d="M3.3 1.3h11l-1.6 12.7H0.3z" fill="url(#npg)"/><path d="M3.3 5.5h9.5M3 7.5h9.5M2.8 9.5h9.5M2.5 11.5h9.5" stroke="#9cc6d3" stroke-width=".8"/><g fill="#3b4650"><circle cx="4.5" cy="1.5" r=".8"/><circle cx="6.5" cy="1.5" r=".8"/><circle cx="8.5" cy="1.5" r=".8"/><circle cx="10.5" cy="1.5" r=".8"/><circle cx="12.5" cy="1.5" r=".8"/></g></svg>
<div class="a" style="left:1135.5px;top:293px;font-size:12.1px;color:#000">A-VoluteNh3ApoSwc - Notepad</div>
<div class="a" style="left:2305px;top:299px;width:10px;height:1px;background:#000"></div>
<div class="a" style="left:2350px;top:294px;width:10px;height:10px;border:1px solid #000"></div>
<svg class="a" style="left:2396px;top:294px" width="10" height="10" viewBox="0 0 10 10"><path d="M0 0L10 10M10 0L0 10" stroke="#000" stroke-width="1"/></svg>
<div class="a" style="left:1113px;top:318px;font-size:12px;color:#000">File</div>
<div class="a" style="left:1143px;top:318px;font-size:12px;color:#000">Edit</div>
<div class="a" style="left:1178px;top:318px;font-size:12px;color:#000">Format</div>
<div class="a" style="left:1229px;top:318px;font-size:12px;color:#000">View</div>
<div class="a" style="left:1268px;top:318px;font-size:12px;color:#000">Help</div>
<div class="a" style="left:1106px;top:333px;width:1317px;height:2px;background:#f0f0f0"></div>
<div class="a" style="left:1106px;top:335px;width:1299px;height:935px;overflow:hidden"><pre class="mono" style="position:absolute;left:3px;top:1.5px;font-size:13.360px;line-height:16.6667px;transform:scaleY(1.08);transform-origin:0 0;color:#000">HKCR,CLSID\%SIMPLE_CONTROL_CLSID%\InprocServer32,,%REG_EXPAND_SZ%,"%%SystemRoot%%\System32\NAHIMICV3NSControl.dll"
HKCR,CLSID\%SIMPLE_CONTROL_CLSID%\InprocServer32,ThreadingModel,,"Both"
HKCR,CLSID\%SIMPLE_CONTROL_CLSID%\Programmable,,%FLG_ADDREG_KEYONLY%
HKCR,CLSID\%SIMPLE_CONTROL_CLSID%\TypeLib,,,%SIMPLE_CONTROL_TYPELIB%
HKCR,CLSID\%SIMPLE_CONTROL_CLSID%\Version,,,"1.0"

[APOExpertControl_AddReg]
HKCR,CLSID\%EXPERT_CONTROL_CLSID%,,,"NSControlExpert Class"
HKCR,CLSID\%EXPERT_CONTROL_CLSID%\InprocServer32,,%REG_EXPAND_SZ%,"%%SystemRoot%%\System32\NAHIMICV3NSControlExpert.dll"
HKCR,CLSID\%EXPERT_CONTROL_CLSID%\InprocServer32,ThreadingModel,,"Both"
HKCR,CLSID\%EXPERT_CONTROL_CLSID%\Programmable,,%FLG_ADDREG_KEYONLY%
HKCR,CLSID\%EXPERT_CONTROL_CLSID%\TypeLib,,,%EXPERT_CONTROL_TYPELIB%
HKCR,CLSID\%EXPERT_CONTROL_CLSID%\Version,,,"1.0"

[Cohabitation_AddReg]
HKLM,SOFTWARE\Nahimic,ProductCohabitation,%REG_DWORD%,2

[Strings]
Provider          = "A-Volute"
Mfg               = "A-Volute"
Apo.ComponentDesc = "Nahimic 3 APO"

FX_STREAM_CLSID   = "{670173e1-78cf-11e5-a837-0800200c9a66}"
FX_MODE_CLSID     = "{670173e2-78cf-11e5-a837-0800200c9a66}"
APO_INTERFACE_SFX = "{658A4077-B277-4D14-97E1-0356044D8110}"
APO_INTERFACE_MFX = "{658A4078-B277-4D14-97E1-0356044D8110}"

SFX_FriendlyName  = "Nahmic Audio Effects (stream effect)"
MFX_FriendlyName  = "Nahmic Audio Effects (mode effect)"
APOCopyRight      = "(c) A-Volute 2017"

SFX_APO_FLAG  = "0x0000000d"
MFX_APO_FLAG  = "0x0000000f"

SERVICE_FRIENDLY_NAME = "Nahimic service"
SERVICE_DESCRIPTION   = "Nahimic service"

CONTROL_CLSID          = "{ceb2eb91-798d-11e5-a837-0800200c9a66}"
CONTROL_TYPELIB        = "{a2b17390-78cf-11e5-a837-0800200c9a66}"
SIMPLE_CONTROL_CLSID   = "{e5b1c2d1-798d-11e5-a837-0800200c9a66}"
SIMPLE_CONTROL_TYPELIB = "{a2b17390-78cf-11e5-a837-0800200c9a66}"
EXPERT_CONTROL_CLSID   = "{f3077511-798d-11e5-a837-0800200c9a66}"
EXPERT_CONTROL_TYPELIB = "{a2b17391-78cf-11e5-a837-0800200c9a66}"

REG_BINARY    = 0x00000001
REG_DWORD     = 0x00010001
REG_MULTI_SZ  = 0x00010000
REG_EXPAND_SZ = 0x00020000

FLG_ADDREG_KEYONLY = 0x00000010
</pre></div>
<div class="a" style="left:2407px;top:335px;width:16px;height:935px;background:#f0f0f0"></div>
<div class="a" style="left:2407px;top:1045px;width:16px;height:207px;background:#cdcdcd"></div>
<svg class="a" style="left:2410px;top:341px" width="9" height="6" viewBox="0 0 9 6"><path d="M1 5L4.5 1.5 8 5" stroke="#606060" fill="none" stroke-width="1.8"/></svg>
<svg class="a" style="left:2410px;top:1258px" width="9" height="6" viewBox="0 0 9 6"><path d="M1 1L4.5 4.5 8 1" stroke="#606060" fill="none" stroke-width="1.8"/></svg>
<div class="a" style="left:1106px;top:1270px;width:1317px;height:16px;background:#f0f0f0"></div>
<svg class="a" style="left:1111px;top:1274px" width="6" height="9" viewBox="0 0 6 9"><path d="M5 1L1.5 4.5 5 8" stroke="#bdbdbd" fill="none" stroke-width="1.8"/></svg>
<svg class="a" style="left:2394px;top:1274px" width="6" height="9" viewBox="0 0 6 9"><path d="M1 1L4.5 4.5 1 8" stroke="#bdbdbd" fill="none" stroke-width="1.8"/></svg>
<div class="a" style="left:1106px;top:1286px;width:1317px;height:1px;background:#d9d9d9"></div>
<div class="a" style="left:1106px;top:1287px;width:1317px;height:21px;background:#f0f0f0"></div>
<div class="a" style="left:1993px;top:1288px;width:1px;height:19px;background:#dcdcdc"></div>
<div class="a" style="left:2132px;top:1288px;width:1px;height:19px;background:#dcdcdc"></div>
<div class="a" style="left:2182px;top:1288px;width:1px;height:19px;background:#dcdcdc"></div>
<div class="a" style="left:2302px;top:1288px;width:1px;height:19px;background:#dcdcdc"></div>
<div class="a" style="left:2004px;top:1292px;font-size:11.5px;color:#000">Ln 1, Col 1</div>
<div class="a" style="left:2140px;top:1292px;font-size:11.5px;color:#000">100%</div>
<div class="a" style="left:2189px;top:1292px;font-size:11.5px;color:#000">Windows (CRLF)</div>
<div class="a" style="left:2309px;top:1292px;font-size:11.5px;color:#000">UTF-8</div>
<svg class="a" style="left:2413px;top:1298px" width="9" height="9" viewBox="0 0 9 9"><g fill="#b5b5b5"><rect x="6" y="0" width="2" height="2"/><rect x="3" y="3" width="2" height="2"/><rect x="6" y="3" width="2" height="2"/><rect x="0" y="6" width="2" height="2"/><rect x="3" y="6" width="2" height="2"/><rect x="6" y="6" width="2" height="2"/></g></svg>
<div class="a" style="left:0;top:1400px;width:2560px;height:40px;background:linear-gradient(90deg,#4f3c7c 0%,#5a4688 4%,#5b468a 12%,#4f3d7b 17%,#463770 25%,#3b2e5b 33%,#3a2d59 45%,#3e3163 52%,#433569 62%,#5a4690 68%,#52418a 78%,#56448b 90%,#4e3d7e 100%)"></div>
<div class="a" style="left:0;top:1400px;width:2560px;height:40px;background:linear-gradient(rgba(255,255,255,.02),rgba(0,0,0,.04) 90%,rgba(0,0,0,.45) 95%,rgba(0,0,0,.45))"></div>
<div class="a" style="left:392px;top:1400px;width:44px;height:40px;background:rgba(255,255,255,.2)"></div>
<div class="a" style="left:436px;top:1400px;width:1px;height:40px;background:rgba(0,0,0,.35)"></div>
<div class="a" style="left:151px;top:1438px;width:40px;height:2px;background:#76b9ed"></div>
<div class="a" style="left:249px;top:1438px;width:40px;height:2px;background:#76b9ed"></div>
<div class="a" style="left:298px;top:1438px;width:40px;height:2px;background:#76b9ed"></div>
<div class="a" style="left:347px;top:1438px;width:40px;height:2px;background:#76b9ed"></div>
<div class="a" style="left:392px;top:1438px;width:44px;height:2px;background:#76b9ed"></div>
<svg class="a" style="left:16px;top:1412px" width="16" height="16" viewBox="0 0 16 16"><path d="M0 2.2L6.5 1.3V7.6H0zM7.5 1.1L16 0V7.6H7.5zM0 8.4H6.5V14.7L0 13.8zM7.5 8.4H16V16L7.5 14.9z" fill="#fff"/></svg>
<svg class="a" style="left:61px;top:1409px" width="20" height="22" viewBox="0 0 20 22"><circle cx="12" cy="8.5" r="7" fill="none" stroke="#fff" stroke-width="1.7"/><path d="M7 13.5L1.5 20" stroke="#fff" stroke-width="2"/></svg>
<svg class="a" style="left:111px;top:1411px" width="16" height="18" viewBox="0 0 16 18"><rect x="1.5" y="4" width="10" height="10" fill="none" stroke="#fff" stroke-width="1.3"/><path d="M0 1.5h13M0 16.5h13M14.5 2v2M14.5 6v10" stroke="#fff" stroke-width="1.3"/></svg>
<svg class="a" style="left:160px;top:1411px" width="21" height="19" viewBox="0 0 21 19"><path d="M0 1h7l2 2h12v15H0z" fill="#e8a317"/><path d="M0 5h21v13H0z" fill="#ffd55c"/><path d="M5 11h11v7H5z" fill="#2a8be0"/><path d="M8 14h5v4H8z" fill="#ffd55c"/></svg>
<svg class="a" style="left:208px;top:1410px" width="23" height="23" viewBox="0 0 23 23"><path d="M7 6V3.5a4.5 4.5 0 0 1 9 0V6" stroke="#1ba0e8" stroke-width="2" fill="none"/><rect x="0.5" y="5.5" width="22" height="17" rx="3" fill="#f4f4f4"/><rect x="7" y="10" width="4" height="4" fill="#f25022"/><rect x="12" y="10" width="4" height="4" fill="#7fba00"/><rect x="7" y="15" width="4" height="4" fill="#00a4ef"/><rect x="12" y="15" width="4" height="4" fill="#ffb900"/></svg>
<svg class="a" style="left:257px;top:1408px" width="24" height="24" viewBox="0 0 24 24"><circle cx="12" cy="12" r="12" fill="#f0102e"/><circle cx="12" cy="12" r="6.5" fill="none" stroke="#fff" stroke-width="1.3"/><path d="M10 8.8l5 3.2-5 3.2z" fill="#fff"/></svg>
<svg class="a" style="left:306px;top:1408px" width="24" height="24" viewBox="0 0 24 24"><circle cx="12" cy="12" r="12" fill="#8ab4f8"/><path d="M12 12L22.4 6A12 12 0 0 0 1.6 6z" fill="#1a73e8"/><path d="M12 12L22.4 6A12 12 0 0 1 12 24z" fill="#c6dafc"/><path d="M12 12L1.6 6A12 12 0 0 0 12 24z" fill="#8ab4f8"/><circle cx="12" cy="12" r="5.2" fill="#1a73e8" stroke="#0b0b18" stroke-width="1.2"/></svg>
<svg class="a" style="left:355px;top:1409px" width="24" height="21" viewBox="0 0 24 21"><defs><linearGradient id="psg" x1="0" y1="0" x2="1" y2="1"><stop offset="0" stop-color="#1cb8e0"/><stop offset="1" stop-color="#0e8fbf"/></linearGradient></defs><path d="M4.5 0.5h19l-2.6 12H1.9z" fill="url(#psg)"/><path d="M6.5 3l5 3.2-5.8 3.6" stroke="#fff" stroke-width="1.6" fill="none"/><path d="M11.5 10h4" stroke="#fff" stroke-width="1.4"/><path d="M1.9 12.5h19l-1 7.5H0.5z" fill="#7e9aa6"/><path d="M3 14h16l-.6 4.5H2.2z" fill="#b9cdd5"/><path d="M5 16.3h7M13 16.3h3" stroke="#4b6470" stroke-width="1.4"/></svg>
<svg class="a" style="left:403px;top:1408px" width="24" height="23" viewBox="0 0 24 23"><defs><linearGradient id="npg2" x1="0" y1="0" x2="1" y2="1"><stop offset="0" stop-color="#e2f5fb"/><stop offset="1" stop-color="#5eb0cc"/></linearGradient></defs><path d="M7 3.5h15v18.5h-15z" fill="#fff" stroke="#a48d58" stroke-width="1.4"/><path d="M5.5 2h15.5l-2.4 17.5H1z" fill="url(#npg2)"/><path d="M5 7h14M4.6 10h14M4.2 13h14M3.8 16h14" stroke="#9cc6d3" stroke-width=".9"/><g fill="#3b4650"><circle cx="7" cy="2" r="1"/><circle cx="10" cy="2" r="1"/><circle cx="13" cy="2" r="1"/><circle cx="16" cy="2" r="1"/><circle cx="19" cy="2" r="1"/></g></svg>
<svg class="a" style="left:2329px;top:1415px" width="12" height="8" viewBox="0 0 12 8"><path d="M1 7L6 2l5 5" stroke="#fff" fill="none" stroke-width="1.2"/></svg>
<svg class="a" style="left:2350px;top:1413px" width="18" height="13" viewBox="0 0 18 13"><path d="M2 0v3M5 0v3M0 3h7v3a3.5 3.5 0 0 1-7 0zM3.5 9v4" stroke="#fff" fill="none" stroke-width="1"/><rect x="5" y="4.5" width="11" height="7" fill="none" stroke="#fff"/><rect x="6" y="5.5" width="6" height="5" fill="#fff"/><rect x="16" y="6.5" width="1.5" height="3" fill="#fff"/></svg>
<svg class="a" style="left:2376px;top:1411px" width="12" height="16" viewBox="0 0 12 16"><rect x="3" y="0" width="6" height="11" rx="3" fill="#fff"/><path d="M1 8a5 5 0 0 0 10 0M6 13v2M3 15h6" stroke="#fff" fill="none"/></svg>
<svg class="a" style="left:2398px;top:1413px" width="18" height="14" viewBox="0 0 18 14"><rect x="4.5" y="0.5" width="13" height="9" fill="none" stroke="#fff"/><rect x="0.5" y="0.5" width="4" height="4" fill="#fff"/><path d="M2.5 4.5V13.5M11 10v3M7.5 13.5h7" stroke="#fff"/></svg>
<svg class="a" style="left:2422px;top:1412px" width="18" height="15" viewBox="0 0 18 15"><path d="M1 5h3l4-4v13l-4-4H1z" fill="none" stroke="#fff"/><path d="M10.5 5a3 3 0 0 1 0 5M13 3a6 6 0 0 1 0 9M15.5 1a9 9 0 0 1 0 13" stroke="#fff" fill="none" opacity=".75"/></svg>
<div class="a" style="left:2440px;top:1402px;width:72px;text-align:center;font-size:11.4px;color:#fff;line-height:18px">7:59 PM<br>1/12/2026</div>
<div class="a" style="left:2521px;top:1401px;width:32px;height:32px;background:#1a1428"></div>
<svg class="a" style="left:2519px;top:1406px" width="26" height="22" viewBox="0 0 26 22"><path d="M1.5 5.5h13v10h-7l-3 3v-3h-3z" fill="none" stroke="#fff" stroke-width="1.1"/><circle cx="17.5" cy="10" r="6" fill="none" stroke="#fff" stroke-width="1.3"/><circle cx="17.5" cy="10" r="2.5" fill="#ddd"/></svg></body></html>
